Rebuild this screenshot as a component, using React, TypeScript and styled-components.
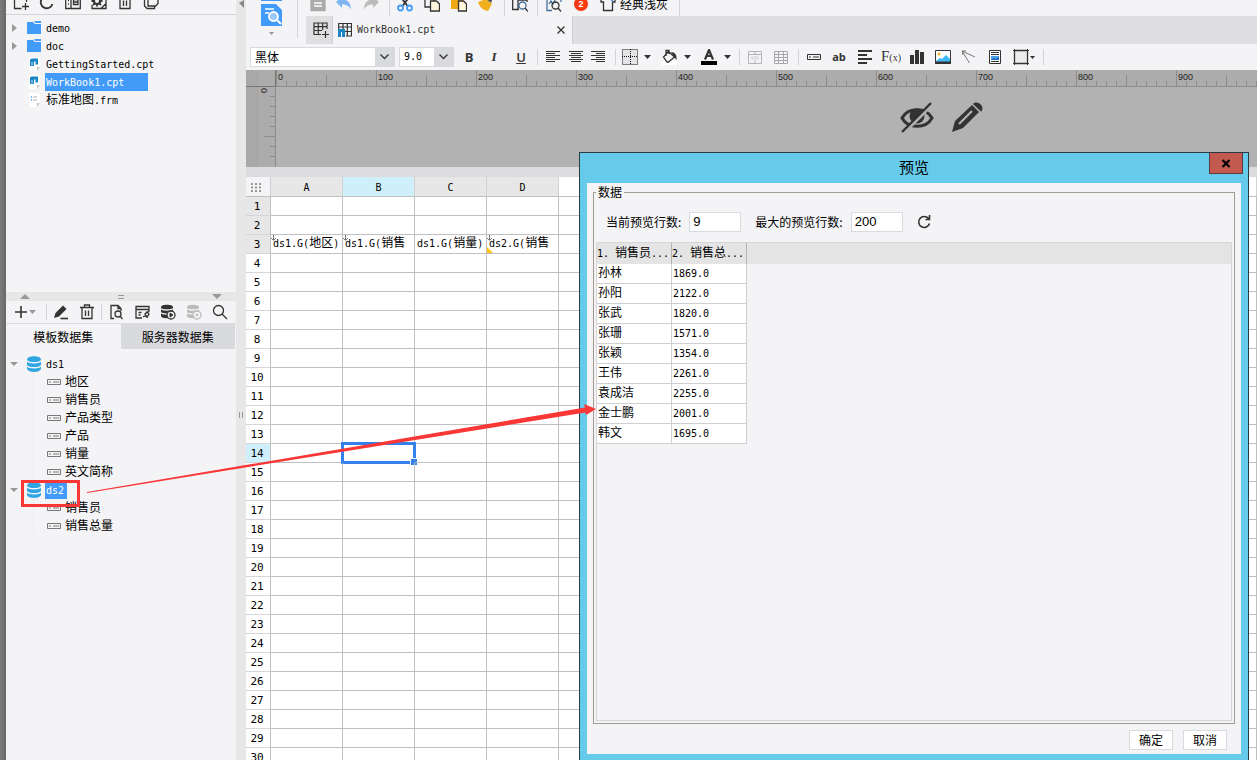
import React, { useEffect, useState } from 'react';
import styled, { createGlobalStyle, css } from 'styled-components';

const han = '"Noto Sans CJK SC", sans-serif';
const mono = '"DejaVu Sans Mono", "Noto Sans CJK SC", monospace';

const GlobalStyle = createGlobalStyle`
  * { box-sizing: border-box; }
  html, body, #root { height: 100%; }
  body { margin: 0; overflow: hidden; background: #f4f4f6; color: #000; font: 10px/18px ${mono}; }
  button, input, select { font: inherit; color: inherit; }
  ul { list-style: none; margin: 0; padding: 0; }
  svg { display: block; flex: none; }
`;

/* ---------- shared parts ---------- */

const useWindowSize = () => {
  const [size, setSize] = useState({ width: window.innerWidth, height: window.innerHeight });
  useEffect(() => {
    const update = () => setSize({ width: window.innerWidth, height: window.innerHeight });
    window.addEventListener('resize', update);
    return () => window.removeEventListener('resize', update);
  }, []);
  return size;
};

const Han = styled.span`
  font-family: ${han};
  font-size: 12px;
  line-height: 0;
`;

const Label = ({ children }: { children: string }) => (
  <>
    {children.split(/([\u4e00-\u9fff]+)/).map((part, i) =>
      i % 2 ? <Han key={i}>{part}</Han> : part,
    )}
  </>
);

const ToolButton = styled.button<{ $w: number }>`
  width: ${(p) => p.$w}px;
  height: 24px;
  flex: none;
  padding: 0;
  border: 0;
  background: none;
  display: flex;
  align-items: center;
  justify-content: center;
`;

const Separator = styled.span<{ $w: number }>`
  width: ${(p) => p.$w}px;
  flex: none;
  display: flex;
  justify-content: center;
  &::before {
    content: '';
    width: 1px;
    height: 16px;
    background: #d4d4d6;
  }
`;

type SvgProps = { w?: number; h?: number; children: React.ReactNode; color?: string };
const Icon = ({ w = 16, h = 16, children, color = '#333' }: SvgProps) => (
  <svg width={w} height={h} viewBox={`0 0 ${w} ${h}`} fill="none" stroke={color} strokeWidth="1.3" aria-hidden="true">
    {children}
  </svg>
);

const Caret = ({ color = '#333' }: { color?: string }) => (
  <Icon w={8} h={5}>
    <path d="M1 0h7L4.500 4z" fill={color} stroke="none" />
  </Icon>
);

/* ---------- page frame ---------- */

const Page = styled.div`
  position: relative;
  display: flex;
  height: 100vh;
  overflow: hidden;
`;

const DesktopEdge = styled.div`
  flex: 0 0 6px;
  background: linear-gradient(90deg, #7c7c7c, #686868);
`;

const Sidebar = styled.aside`
  flex: 0 0 230px;
  display: flex;
  flex-direction: column;
  background: #f4f4f6;
`;

const Divider = styled.div`
  flex: 0 0 10px;
  background: #e7e7e8;
  display: flex;
  flex-direction: column;
  align-items: center;
  gap: 403px;
`;

const Main = styled.main`
  flex: 1;
  min-width: 0;
  display: flex;
  flex-direction: column;
`;

/* ---------- sidebar ---------- */

const FileTools = styled.div`
  flex: 0 0 15px;
  display: flex;
  align-items: flex-end;
  padding-left: 2px;
  overflow: hidden;
  border-bottom: 1px solid #d4d4d6;
`;

const FileTree = styled.ul`
  flex: 0 0 277px;
  && { padding-top: 4px; }
`;

const FileRow = styled.li`
  display: flex;
  align-items: center;
  height: 18px;
`;

const Toggle = styled.span`
  width: 21px;
  padding-left: 4px;
`;

const NodeIcon = styled.span`
  width: 18px;
`;

const NodeName = styled.a<{ $selected?: boolean; $w?: number }>`
  height: 18px;
  color: inherit;
  text-decoration: none;
  white-space: nowrap;
  line-height: 20px;
  padding-left: 1px;
  ${(p) => p.$w && css`width: ${p.$w}px;`}
  ${(p) => p.$selected && css`background: #429bf8; color: #fff;`}
`;

const SplitBar = styled.div`
  flex: 0 0 9px;
  display: flex;
  align-items: center;
  justify-content: space-between;
  padding: 0 14px;
  background: #e7e7e8;
`;

const DataTools = styled.div`
  flex: 0 0 23px;
  min-height: 0;
  display: flex;
  align-items: center;
  border-bottom: 1px solid #dcdcde;
`;

const Tabs = styled.div`
  flex: 0 0 25px;
  display: flex;
  padding-right: 1px;
`;

const Tab = styled.button<{ $muted?: boolean }>`
  flex: 1;
  border: 0;
  padding: 0;
  font: 12px/18px ${han};
  background: ${(p) => (p.$muted ? '#d9dade' : 'transparent')};
`;

const DataTree = styled.ul`
  && { padding-top: 6px; }
`;

const FieldList = styled.ul`
  && { margin-left: 27px; border-left: 1px solid #ececee; }
`;

const FieldRow = styled.li`
  display: flex;
  align-items: center;
  gap: 3px;
  height: 18px;
  padding-left: 13px;
`;

const FolderIcon = () => (
  <Icon w={15} h={14}>
    <path d="M0 1h6l2 2h6v10H0z" fill="#429bf8" stroke="none" />
    <path d="M7 0h7v2H8.500z" fill="#429bf8" stroke="none" />
  </Icon>
);

const CptIcon = () => (
  <Icon w={15} h={14}>
    <path d="M2 0h11v10l-3 4H2z" fill="#fff" stroke="none" />
    <path d="M13 10l-3 4v-4z" fill="#c8c8ca" stroke="none" />
    <path d="M4 1.500h7v6H8.500V4.500H7V9H3V3z" fill="#1b86c6" stroke="none" />
    <path d="M5 5v3.500" stroke="#bfe3f5" strokeWidth="1" />
  </Icon>
);

const FrmIcon = () => (
  <Icon w={15} h={14}>
    <path d="M2 0h11v10l-3 4H2z" fill="#fff" stroke="none" />
    <path d="M13 10l-3 4v-4z" fill="#c8c8ca" stroke="none" />
    <path d="M4 4h1M4 7h1" stroke="#429bf8" />
    <path d="M6 4h4M6 7h4" stroke="#ccc" />
  </Icon>
);

const DatabaseIcon = () => (
  <Icon w={15} h={16}>
    <path d="M0 3.500C0-1 14-1 14 3.500v9c0 4.500-14 4.500-14 0z" fill="#2ea6e3" stroke="none" />
    <path d="M0 4.500c1 3 13 3 14 0M0 9.500c1 3 13 3 14 0" stroke="#f4f4f6" />
  </Icon>
);

const FieldIcon = ({ color = '#777' }: { color?: string }) => (
  <Icon w={14} h={6} color={color}>
    <path d="M.5.5h13v5H.5zM2 3h2M6 3h6" strokeWidth="1" />
  </Icon>
);

const Toggler = ({ open }: { open?: boolean }) => (
  <Icon w={9} h={8}>
    <path d={open ? 'M0 2h8L4 6z' : 'M2 0v8l5-4z'} fill="#999" stroke="none" />
  </Icon>
);

const files = [
  { name: 'demo', kind: 'dir' },
  { name: 'doc', kind: 'dir' },
  { name: 'GettingStarted.cpt', kind: 'cpt' },
  { name: 'WorkBook1.cpt', kind: 'cpt', selected: true },
  { name: '标准地图.frm', kind: 'frm' },
];

const datasets = [
  { name: 'ds1', fields: ['地区', '销售员', '产品类型', '产品', '销量', '英文简称'] },
  { name: 'ds2', selected: true, fields: ['销售员', '销售总量'] },
];

const DbToolIcon = ({ color, mark }: { color: string; mark: string }) => (
  <Icon color={color}>
    <path d="M1 3c0-3 12-3 12 0v9c0 3-12 3-12 0z" fill={color} stroke="none" />
    <path d="M1 4.500c1 2 11 2 12 0M1 8.500c1 2 11 2 12 0" stroke="#f4f4f6" />
    <circle cx="11" cy="11" r="4" fill="#f4f4f6" />
    <path d={mark} fill={color} strokeWidth="1" />
  </Icon>
);

const TrashIcon = () => (
  <Icon w={14}>
    <path d="M0 3.500h14M4.500 3V1h5v2M2 4v10.500h10V4M5.500 6.500v5.500M8.500 6.500v5.500" />
  </Icon>
);

const SidebarPanel = () => (
  <Sidebar>
    <FileTools>
      <ToolButton $w={26} aria-label="新建">
        <Icon><path d="M8.500 14.500H1.500V1h4l2 2.500h6V8M12.500 9v7M9 12.500h7" /></Icon>
      </ToolButton>
      <ToolButton $w={26} aria-label="刷新">
        <Icon><path d="M13.500 10A6 6 0 1 1 12 4M13 0v5H8" strokeWidth="1.800" /></Icon>
      </ToolButton>
      <ToolButton $w={26} aria-label="视图">
        <Icon><path d="M.7 2h14.600v12.500H.7zM6 2v12.500M3 6.500h1M3 10h1M8.500 5.500h4.500v5H8.500zM8.500 8h4.500" /></Icon>
      </ToolButton>
      <ToolButton $w={26} aria-label="设置">
        <Icon>
          <path d="M1 11v3.500h14V3M12 12.500l3-3v5h-5z" />
          <circle cx="6" cy="7" r="3" strokeWidth="2" />
          <path d="M6 1.500V4M6 10v2.500M.5 7H3M9 7h2.500M2 3l2 2M8 9l2 2M2 11l2-2M8 5l2-2" strokeWidth="1.800" />
        </Icon>
      </ToolButton>
      <ToolButton $w={26} aria-label="删除"><TrashIcon /></ToolButton>
      <ToolButton $w={26} aria-label="复制">
        <Icon><path d="M5 1h10v8.500l-2.500 2.500H5zM5 4H1.500v8l2.500 2.500h7.500V12" /></Icon>
      </ToolButton>
    </FileTools>
    <FileTree>
      {files.map((f) => (
        <FileRow key={f.name}>
          <Toggle>{f.kind === 'dir' && <Toggler />}</Toggle>
          <NodeIcon>
            {f.kind === 'dir' ? <FolderIcon /> : f.kind === 'cpt' ? <CptIcon /> : <FrmIcon />}
          </NodeIcon>
          <NodeName href="#" $selected={f.selected} $w={f.selected ? 103 : undefined}>
            <Label>{f.name}</Label>
          </NodeName>
        </FileRow>
      ))}
    </FileTree>
    <SplitBar>
      <Icon w={10} h={5}><path d="M0 5h10L5 0z" fill="#999" stroke="none" /></Icon>
      <Icon w={6} h={4} color="#999"><path d="M0 .5h6M0 3.500h6" strokeWidth="1" /></Icon>
      <Icon w={10} h={5}><path d="M0 0h10L5 5z" fill="#999" stroke="none" /></Icon>
    </SplitBar>
    <DataTools>
      <ToolButton $w={38} aria-label="新增">
        <Icon w={24}><path d="M2 8h12M8 2v12" strokeWidth="1.600" /><path d="M16 6h7l-3.500 4z" fill="#999" stroke="none" /></Icon>
      </ToolButton>
      <Separator $w={4} />
      <ToolButton $w={26} aria-label="编辑">
        <Icon><path d="M1 14l1.500-5L10 1.500l3.500 3.500L6 12.500z" fill="#333" stroke="none" /><path d="M7.500 14.500H15" strokeWidth="1.600" /></Icon>
      </ToolButton>
      <ToolButton $w={25} aria-label="删除"><TrashIcon /></ToolButton>
      <Separator $w={5} />
      <ToolButton $w={26} aria-label="预览">
        <Icon>
          <path d="M5 14.500H2V1.500h7l3 3V7M9 1.500v3h3" />
          <circle cx="9" cy="10" r="3" />
          <path d="M11 12l2.500 3" />
        </Icon>
      </ToolButton>
      <ToolButton $w={25} aria-label="连接">
        <Icon><path d="M7 14H1V2.500h13V7M1 5.500h13M3.500 8.500h3M3.500 11h2M8 13l2-1 3 1.500M10 10l2-2 2 2-2 3zM13 8l1.500-1.500" /></Icon>
      </ToolButton>
      <ToolButton $w={26} aria-label="执行"><DbToolIcon color="#333" mark="M10 9l3 2-3 2z" /></ToolButton>
      <ToolButton $w={26} aria-label="清除"><DbToolIcon color="#bbb" mark="M9.500 9.500l3 3M12.500 9.500l-3 3" /></ToolButton>
      <ToolButton $w={25} aria-label="搜索">
        <Icon><circle cx="6.500" cy="6.500" r="5" /><path d="M10 10l5 5" /></Icon>
      </ToolButton>
    </DataTools>
    <Tabs role="tablist">
      <Tab role="tab" aria-selected="true">模板数据集</Tab>
      <Tab role="tab" aria-selected="false" $muted>服务器数据集</Tab>
    </Tabs>
    <DataTree>
      {datasets.map((d) => (
        <li key={d.name}>
          <FileRow as="div">
            <Toggle><Toggler open /></Toggle>
            <NodeIcon><DatabaseIcon /></NodeIcon>
            <NodeName href="#" $selected={d.selected} $w={d.selected ? 22 : undefined}>{d.name}</NodeName>
          </FileRow>
          <FieldList>
            {d.fields.map((f) => (
              <FieldRow key={f}><FieldIcon /><NodeName href="#"><Label>{f}</Label></NodeName></FieldRow>
            ))}
          </FieldList>
        </li>
      ))}
    </DataTree>
  </Sidebar>
);

/* ---------- header bars ---------- */

const Header = styled.header`
  flex: 0 0 44px;
  display: flex;
  background: #f4f4f6;
`;

const PreviewButton = styled.button`
  width: 51px;
  padding: 0;
  border: 0;
  background: none;
  display: flex;
  flex-direction: column;
  align-items: center;
  gap: 6px;
`;

const HeaderRule = styled.span`
  width: 1px;
  height: 38px;
  margin-right: 8px;
  background: #d4d4d6;
`;

const HeaderRows = styled.div`
  flex: 1;
  min-width: 0;
  display: flex;
  flex-direction: column;
`;

const TopTools = styled.div`
  flex: 0 0 16px;
  display: flex;
  align-items: flex-end;
  overflow: hidden;
`;

const ThemeButton = styled(ToolButton)`
  gap: 4px;
  font: 12px/18px ${han};
`;

const Badge = styled.span`
  width: 14px;
  height: 14px;
  border-radius: 50%;
  background: #f83a10;
  color: #fff;
  font: bold 9px/14px "Liberation Sans", sans-serif;
`;

const DocTabs = styled.div`
  flex: 1;
  display: flex;
  background: #dfdfe1;
`;

const AddTab = styled(ToolButton)`
  height: 28px;
  padding-left: 4px;
  border-right: 1px solid #cfcfd1;
`;

const DocTab = styled.div`
  width: 240px;
  display: flex;
  align-items: center;
  gap: 5px;
  padding: 0 6px 0 5px;
  background: #f4f4f6;
  border-right: 1px solid #cfcfd1;
  color: #333;
`;

const DocName = styled.span`
  flex: 1;
  line-height: 20px;
`;

const FormatBar = styled.div`
  flex: 0 0 26px;
  display: flex;
  align-items: center;
  padding-left: 4px;
  background: #f4f4f6;
`;

const Combo = styled.div<{ $w: number }>`
  width: ${(p) => p.$w}px;
  height: 20px;
  margin-right: 4px;
  flex: none;
  display: grid;
  grid-template-columns: 1fr 19px;
  border: 1px solid #d9dade;
`;

const ComboSelect = styled.select<{ $han?: boolean }>`
  grid-area: 1 / 1 / 2 / 3;
  appearance: none;
  border: 0;
  border-radius: 0;
  padding: 0 0 0 4px;
  background: linear-gradient(270deg, #d9dade 19px, #fff 19px);
  ${(p) => p.$han && css`font: 12px/18px ${han};`}
`;

const ComboArrow = styled.span`
  grid-area: 1 / 2;
  display: grid;
  place-items: center;
  pointer-events: none;
`;

const Glyph = styled.span<{ $look: 'b' | 'i' | 'u' | 'ab' | 'fx' }>`
  color: #333;
  font: bold 13px/16px "Open Sans", sans-serif;
  ${(p) => p.$look === 'i' && css`font-family: "Liberation Serif", serif; font-style: italic;`}
  ${(p) => p.$look === 'u' && css`text-decoration: underline; font-weight: 600;`}
  ${(p) => p.$look === 'ab' && css`font-size: 11px;`}
  ${(p) => p.$look === 'fx' && css`font: 15px/16px "Liberation Serif", serif;`}
`;

const Small = styled.small`
  font-size: 10px;
`;

const Chevron = () => (
  <Icon w={9} h={6}><path d="M.5.5l4 4 4-4" /></Icon>
);

const Lines = ({ d }: { d: string }) => (
  <Icon w={14} h={12}><path d={d} strokeWidth="1" /></Icon>
);

const HeaderBars = () => (
  <>
    <Header>
      <PreviewButton aria-label="模板预览">
        <Icon w={22} h={26}>
          <path d="M0 0h21v1H0zM0 4h15l6 6v16H0z" fill="#429bf8" stroke="none" />
          <path d="M4 9h9M4 13h4" stroke="#fff" strokeWidth="1.600" />
          <circle cx="12.500" cy="16.500" r="4.500" fill="#9cc9fb" stroke="#fff" strokeWidth="1.800" />
          <path d="M16 20l4 4" stroke="#fff" strokeWidth="2.200" />
        </Icon>
        <Icon w={5} h={3}><path d="M0 0h5L2.500 3z" fill="#999" stroke="none" /></Icon>
      </PreviewButton>
      <HeaderRule />
      <HeaderRows>
        <TopTools>
          <ToolButton $w={24} aria-label="保存">
            <Icon color="#aaa"><path d="M1 0h14v14.500H1z" fill="#aaa" /><path d="M4 7h8M4 10h8" stroke="#fff" /></Icon>
          </ToolButton>
          <ToolButton $w={28} aria-label="撤销">
            <Icon><path d="M0 6l6-6v3.500c6 0 9 4 9 10-2-3.500-4-5-9-5V12z" fill="#7fb5f2" stroke="none" /></Icon>
          </ToolButton>
          <ToolButton $w={26} aria-label="重做">
            <Icon><path d="M16 6l-6-6v3.500C4 3.500 1 7.500 1 13.500c2-3.500 4-5 9-5V12z" fill="#bbb" stroke="none" /></Icon>
          </ToolButton>
          <Separator $w={10} />
          <ToolButton $w={22} aria-label="剪切">
            <Icon><path d="M3 0l7.500 10M13 0L5.500 10" strokeWidth="1.800" /><circle cx="3.500" cy="12" r="2.500" stroke="#429bf8" strokeWidth="1.800" /><circle cx="12.500" cy="12" r="2.500" stroke="#429bf8" strokeWidth="1.800" /></Icon>
          </ToolButton>
          <ToolButton $w={32} aria-label="复制">
            <Icon><path d="M6 11H1V1h9v4" /><path d="M6.500 5h6l3 3v7h-9z" fill="#fff6dc" /></Icon>
          </ToolButton>
          <ToolButton $w={22} aria-label="粘贴">
            <Icon><path d="M0 1h12v12H0z" fill="#f2a916" stroke="none" /><path d="M7.500 5h5l3 3v7h-8z" fill="#fff6dc" /></Icon>
          </ToolButton>
          <ToolButton $w={30} aria-label="格式刷">
            <Icon><path d="M1 6l8-3 6 5-4 7C5 14 3 11 1 6z" fill="#f2b01e" stroke="none" /><path d="M9 3l5 4 2-5-4-3z" fill="#555" stroke="none" /></Icon>
          </ToolButton>
          <Separator $w={8} />
          <ToolButton $w={24} aria-label="查找">
            <Icon><path d="M7 13.500H.7V0M6 13V4h9v2" /><circle cx="10.500" cy="9.500" r="3.500" stroke="#46709c" /><path d="M13 12l3 3.500" /></Icon>
          </ToolButton>
          <Separator $w={10} />
          <ToolButton $w={24} aria-label="监控">
            <Icon><path d="M6 14.500H1V0M15 0v6M3 8l2-3 2 3 2-4" stroke="#46709c" /><circle cx="9.500" cy="9.500" r="3.500" /><path d="M12 12l3 3.500" /></Icon>
          </ToolButton>
          <ToolButton $w={30} aria-label="消息"><Badge>2</Badge></ToolButton>
          <ThemeButton $w={76}>
            <Icon><path d="M3.500 6H1V2l4-2h6l4 2v4h-2.500v8.500h-9z" /><path d="M11 3h2v2h-2z" fill="#429bf8" stroke="none" /></Icon>
            经典浅灰
          </ThemeButton>
          <Separator $w={14} />
        </TopTools>
        <DocTabs>
          <AddTab $w={27} aria-label="新建模板">
            <Icon><path d="M8 12.500H1V1h13v6M1 4.700h13M1 8.500h8M5.300 1v11.500M9.700 1v7M12.500 9v7M9 12.500h7" strokeWidth="1.200" /></Icon>
          </AddTab>
          <DocTab>
            <Icon w={14}><path d="M8 14h5.500V1.500H.7V7M.7 5h13M7 9.500h6.500M5 1.500V7M9.300 1.500V14" strokeWidth="1.200" /><path d="M0 7h7v8H4v-5H3v5H0z" fill="#1b86c6" stroke="none" /></Icon>
            <DocName>WorkBook1.cpt</DocName>
            <ToolButton $w={10} aria-label="关闭"><Icon w={8} h={8}><path d="M.5.5l7 7M7.500.5l-7 7" /></Icon></ToolButton>
          </DocTab>
        </DocTabs>
      </HeaderRows>
    </Header>
    <FormatBar>
      <Combo $w={145}>
        <ComboSelect $han aria-label="字体" defaultValue="黑体"><option>黑体</option></ComboSelect>
        <ComboArrow><Chevron /></ComboArrow>
      </Combo>
      <Combo $w={55}>
        <ComboSelect aria-label="字号" defaultValue="9.0"><option>9.0</option></ComboSelect>
        <ComboArrow><Chevron /></ComboArrow>
      </Combo>
      <ToolButton $w={22} aria-label="加粗"><Glyph $look="b">B</Glyph></ToolButton>
      <ToolButton $w={28} aria-label="斜体"><Glyph $look="i">I</Glyph></ToolButton>
      <ToolButton $w={26} aria-label="下划线"><Glyph $look="u">U</Glyph></ToolButton>
      <Separator $w={6} />
      <ToolButton $w={26} aria-label="左对齐"><Lines d="M0 .5h14M0 2.500h9M0 4.500h14M0 6.500h9M0 8.500h14M0 10.500h9" /></ToolButton>
      <ToolButton $w={20} aria-label="居中"><Lines d="M0 .5h14M2 2.500h10M0 4.500h14M2 6.500h10M0 8.500h14M2 10.500h10" /></ToolButton>
      <ToolButton $w={24} aria-label="右对齐"><Lines d="M0 .5h14M5 2.500h9M0 4.500h14M5 6.500h9M0 8.500h14M5 10.500h9" /></ToolButton>
      <Separator $w={10} />
      <ToolButton $w={20} aria-label="边框">
        <Icon><path d="M.5.5h15v15H.5zM8.500 0v16M0 7.500h16" fill="#e4e4e6" strokeWidth="1" strokeDasharray="1 1" stroke="#111" /></Icon>
      </ToolButton>
      <ToolButton $w={14} aria-label="边框选项"><Caret /></ToolButton>
      <ToolButton $w={26} aria-label="填充">
        <Icon w={22}>
          <path d="M5 12h16v4H5z" fill="#fff" stroke="none" />
          <path d="M12.500 2.500l6 5.500-6 5H11L7.500 8zM10 7V1.500h3V5" />
          <path d="M15 3c4 0 6 3 5.500 8L18 8z" fill="#333" stroke="none" />
        </Icon>
      </ToolButton>
      <ToolButton $w={14} aria-label="填充选项"><Caret /></ToolButton>
      <ToolButton $w={26} aria-label="字体颜色">
        <Icon w={20}>
          <path d="M4 12h16v4H4z" fill="#000" stroke="none" />
          <path d="M8 10.500l4-9.500 4 9.500M9.500 7h5" strokeWidth="2.200" />
        </Icon>
      </ToolButton>
      <ToolButton $w={14} aria-label="颜色选项"><Caret /></ToolButton>
      <Separator $w={10} />
      <ToolButton $w={22} aria-label="合并单元格">
        <Icon w={14} h={13} color="#b4b4b6"><path d="M.5.5h13v12H.5zM.5 3.500h13M7 .5v3M7 9.500v3" strokeWidth="1" /><path d="M3 5h8v4H3z" fill="#e2e2e4" stroke="none" /></Icon>
      </ToolButton>
      <ToolButton $w={30} aria-label="取消合并">
        <Icon w={14} h={13} color="#a8a8aa"><path d="M.5.5h13v12H.5zM.5 3.500h13M.5 6.500h13M.5 9.500h13M4.500 .5v12M9.500.5v12" strokeWidth="1" /></Icon>
      </ToolButton>
      <Separator $w={5} />
      <ToolButton $w={25} aria-label="数据列"><FieldIcon color="#333" /></ToolButton>
      <ToolButton $w={26} aria-label="文本"><Glyph $look="ab">ab</Glyph></ToolButton>
      <ToolButton $w={26} aria-label="富文本"><Icon w={14} h={14}><path d="M0 1h14M0 5h9M0 9h14M0 13h9" strokeWidth="1.800" /></Icon></ToolButton>
      <ToolButton $w={26} aria-label="公式"><Glyph $look="fx">F<Small>(x)</Small></Glyph></ToolButton>
      <ToolButton $w={26} aria-label="图表"><Icon w={14} h={14}><path d="M0 5h4v9H0zM5 0h4v14H5zM10 2h4v12h-4z" fill="#333" stroke="none" /></Icon></ToolButton>
      <ToolButton $w={26} aria-label="图片">
        <Icon w={16} h={14}><path d="M.5.5h15v13H.5z" fill="#fff" strokeWidth="1" /><path d="M1 11l4-3 2 1 4-4 4 4v3H1z" fill="#3fb9f5" stroke="none" /><circle cx="4" cy="4" r="1.500" fill="#f5b32b" stroke="none" /><path d="M0 12.500h16" strokeWidth="2" /></Icon>
      </ToolButton>
      <ToolButton $w={26} aria-label="斜线"><Icon w={14} h={14} color="#777"><path d="M0 1l13 6M0 1l7.500 12M0 1l4 0M0 1l1 4" strokeWidth="1" /></Icon></ToolButton>
      <ToolButton $w={26} aria-label="子报表">
        <Icon w={12} h={14}><path d="M.5.5h11v13H.5z" fill="#fff" strokeWidth="1" /><path d="M2 2.500h8M2 4.500h8M2 11.500h8" strokeWidth="1" /><path d="M2 6h8v4H2z" fill="#4aa0ea" stroke="none" /><path d="M2 10l3-2 2 1 3-2v3z" fill="#1a66b8" stroke="none" /></Icon>
      </ToolButton>
      <ToolButton $w={32} aria-label="悬浮元素">
        <Icon w={22}><path d="M1.500 1.500h13v13h-13z" fill="#ececee" /><path d="M0 1.500h16M0 14.500h16M1.500 0v16M14.500 0v16" strokeWidth="1" /><path d="M17 7h5l-2.500 3z" fill="#333" stroke="none" /></Icon>
      </ToolButton>
      <Separator $w={7} />
    </FormatBar>
  </>
);

/* ---------- parameter pane ---------- */

const ParameterPane = styled.section`
  flex: 0 0 97px;
  display: grid;
  grid-template: 17px 80px / 30px 1fr;
  overflow: hidden;
  background: #b2b2b2;
`;

const RulerCorner = styled.div`
  border-right: 1px solid #777;
  border-bottom: 1px solid #777;
  background: linear-gradient(90deg, #a8a8a8 13px, #acacac 13px);
`;

const TopRuler = styled.div`
  display: flex;
  overflow: hidden;
  background: #acacac;
  border-bottom: 1px solid #8c8c8c;
`;

const SideRuler = styled.div`
  display: flex;
  justify-content: flex-end;
  border-right: 1px solid #8c8c8c;
  background: linear-gradient(90deg, #a8a8a8 13px, #acacac 13px);
`;

const RulerText = styled.text`
  font: 9px "Liberation Sans", sans-serif;
  fill: #222;
  stroke: none;
`;

const PaneTools = styled.div`
  display: flex;
  gap: 18px;
  padding: 18px 0 0 624px;
`;

const RulerUnit = ({ value }: { value: number }) => (
  <Icon w={100} h={16} color="#8c8c8c">
    <path
      d="M.5 0v16M10.500 11v5M20.500 11v5M30.500 11v5M40.500 11v5M50.500 5v11M60.500 11v5M70.500 11v5M80.500 11v5M90.500 11v5"
      strokeWidth="1"
    />
    <RulerText x="2" y="10">{value}</RulerText>
  </Icon>
);

const Parameters = () => {
  const { width } = useWindowSize();
  const units = Math.ceil((width - 276) / 100);
  return (
    <ParameterPane>
      <RulerCorner />
      <TopRuler>{Array.from({ length: units }, (_, i) => <RulerUnit key={i} value={i * 100} />)}</TopRuler>
      <SideRuler>
        <Icon w={16} h={80} color="#8c8c8c">
          <path d="M11 9.500h5M11 19.500h5M11 29.500h5M11 39.500h5M5 49.500h11M11 59.500h5M11 69.500h5" strokeWidth="1" />
          <RulerText transform="translate(8 6) rotate(-90)">0</RulerText>
        </Icon>
      </SideRuler>
      <PaneTools>
        <ToolButton $w={34} aria-label="隐藏">
          <Icon w={34} h={32}>
            <path d="M2 17C8 6 26 6 32 17 26 28 8 28 2 17z" strokeWidth="3" />
            <circle cx="17" cy="15" r="7.500" fill="#333" stroke="none" />
            <path d="M4 32L33 3" stroke="#b2b2b2" strokeWidth="3" />
            <path d="M2 31L31 2" strokeWidth="2.400" />
          </Icon>
        </ToolButton>
        <ToolButton $w={32} aria-label="编辑参数">
          <Icon w={32} h={32}>
            <path d="M0 31l3-11L20 4l7 7-16 16z" fill="#333" stroke="none" />
            <path d="M21 3c4-5 13 3 8 7.500z" fill="#333" stroke="none" />
            <path d="M7 23L20 10" stroke="#b2b2b2" strokeWidth="2.200" />
          </Icon>
        </ToolButton>
      </PaneTools>
    </ParameterPane>
  );
};

/* ---------- sheet ---------- */

const SheetArea = styled.section`
  flex: 1;
  min-height: 0;
  overflow: hidden;
  border-top: 10px solid #dcdcde;
  background: #fff;
`;

const Sheet = styled.table`
  width: 100%;
  table-layout: fixed;
  border-spacing: 0;
`;

const ColHead = styled.th<{ $w?: number; $tone?: string }>`
  ${(p) => p.$w && css`width: ${p.$w}px;`}
  height: 20px;
  padding: 2px 0 0;
  font: 10px/16px ${mono};
  background: ${(p) => p.$tone ?? '#e7e7e8'};
  border-right: 1px solid #d0d0d2;
  border-bottom: 1px solid #c0c0c0;
`;

const Corner = styled(ColHead)`
  background: #f4f4f6;
  svg { margin: 0 0 0 5px; }
`;

const RowHead = styled.th<{ $tone: string }>`
  height: 19px;
  padding: 2px 2px 0 0;
  font: 11px/16px "DejaVu Sans Mono", monospace;
  text-align: center;
  background: ${(p) => p.$tone};
  border-right: 1px solid #c0c0c0;
  border-bottom: 1px solid #d6d6d8;
`;

const Cell = styled.td`
  position: relative;
  height: 19px;
  padding: 0 0 0 2px;
  line-height: 18px;
  white-space: nowrap;
  border-right: 1px solid #c0c0c0;
  border-bottom: 1px solid #c0c0c0;
`;

const ExpandMark = styled.span`
  position: absolute;
  left: 0;
  top: 0;
`;

const CornerMark = styled.span`
  position: absolute;
  left: 0;
  bottom: 0;
  border: 3px solid transparent;
  border-left-color: #ffc20e;
  border-bottom-color: #ffc20e;
`;

const Selection = styled.span`
  position: absolute;
  inset: -2px;
  border: 3px solid #3481ec;
  &::after {
    content: '';
    position: absolute;
    right: -4px;
    bottom: -4px;
    width: 6px;
    height: 6px;
    background: #3481ec;
    border: 1px solid #fff;
    border-right: 0;
    border-bottom: 0;
  }
`;

const formulas: Record<string, { text: string; expand?: boolean; flag?: boolean }> = {
  A3: { text: 'ds1.G(地区)', expand: true },
  B3: { text: 'ds1.G(销售', expand: true },
  C3: { text: 'ds1.G(销量)' },
  D3: { text: 'ds2.G(销售', expand: true, flag: true },
};

const SheetView = () => {
  const { height } = useWindowSize();
  const rows = Math.max(14, Math.ceil((height - 197) / 19));
  return (
    <SheetArea>
      <Sheet>
        <thead>
          <tr>
            <Corner $w={25} aria-label="全选">
              <Icon w={10} h={9} color="#999">
                <path d="M0 1h2M4 1h2M8 1h2M0 4.500h2M4 4.500h2M8 4.500h2M0 8h2M4 8h2M8 8h2" strokeWidth="2" />
              </Icon>
            </Corner>
            {['A', 'B', 'C', 'D'].map((c) => (
              <ColHead key={c} $w={72} $tone={c === 'B' ? '#cfeffb' : undefined}>{c}</ColHead>
            ))}
            <ColHead $tone="#fff" />
          </tr>
        </thead>
        <tbody>
          {Array.from({ length: rows }, (_, i) => i + 1).map((r) => (
            <tr key={r}>
              <RowHead $tone={r === 14 ? '#cfeffb' : r < 4 ? '#e7e7e8' : '#fff'}>{r}</RowHead>
              {['A', 'B', 'C', 'D', 'E'].map((c) => {
                const f = formulas[c + r];
                return (
                  <Cell key={c}>
                    {f && <Label>{f.text}</Label>}
                    {f?.expand && (
                      <ExpandMark><Icon w={6} h={6} color="#777"><path d="M2.500 0v5M0 3l2.500 2.500L5 3" strokeWidth="1" /></Icon></ExpandMark>
                    )}
                    {f?.flag && <CornerMark />}
                    {c + r === 'B14' && <Selection />}
                  </Cell>
                );
              })}
            </tr>
          ))}
        </tbody>
      </Sheet>
    </SheetArea>
  );
};

/* ---------- preview window ---------- */

const Dialog = styled.section`
  position: absolute;
  left: 579px;
  right: 8px;
  top: 152px;
  bottom: 0;
  display: flex;
  flex-direction: column;
  background: #66caea;
  border: 1px solid #2b3b44;
  border-bottom: 0;
  font: 12px/18px ${han};
`;

const TitleBar = styled.div`
  flex: 0 0 30px;
  display: grid;
  grid-template-columns: 1fr auto 1fr;
  padding: 0 5px;
`;

const Title = styled.h1`
  grid-column: 2;
  margin: 0;
  font: 15px/28px ${han};
`;

const CloseButton = styled.button`
  justify-self: end;
  width: 34px;
  height: 21px;
  padding: 0;
  display: grid;
  place-items: center;
  background: #c35a50;
  border: 1px solid #5e3a40;
  border-top: 0;
`;

const DialogBody = styled.div`
  flex: 1;
  min-height: 0;
  display: flex;
  flex-direction: column;
  margin: 0 7px 6px;
  padding: 1px 6px 0;
  background: #f4f4f6;
`;

const Group = styled.fieldset`
  flex: 1;
  min-height: 0;
  min-width: 0;
  display: flex;
  flex-direction: column;
  margin: 0;
  padding: 0 2px 2px;
  border: 1px solid #a09c92;
`;

const Legend = styled.legend`
  height: 16px;
  padding: 0 2px;
  line-height: 16px;
`;

const Controls = styled.div`
  flex: 0 0 42px;
  display: flex;
  align-items: center;
  padding: 1px 0 0 10px;
`;

const NumberField = styled.input`
  width: 52px;
  height: 20px;
  margin: 0 14px 0 8px;
  padding: 0 3px;
  border: 1px solid #d9dade;
  background: #fff;
  font: 13px/18px "Liberation Sans", sans-serif;
`;

const ResultPane = styled.div`
  flex: 1;
  min-height: 0;
  border: 1px solid #d6d6d8;
`;

const ResultTable = styled.table`
  width: 100%;
  table-layout: fixed;
  border-spacing: 0;
  font: 10px/18px ${mono};
`;

const ResultHead = styled.th<{ $w?: number }>`
  ${(p) => p.$w && css`width: ${p.$w}px; border-right: 1px solid #b4b4ac;`}
  height: 21px;
  padding: 0;
  font-weight: normal;
  text-align: left;
  white-space: nowrap;
  background: #e4e4e5;
`;

const ResultCell = styled.td`
  height: 20px;
  padding: 0 0 0 1px;
  background: #fff;
  border-right: 1px solid #d0d0d2;
  border-bottom: 1px solid #d0d0d2;
`;

const Footer = styled.div`
  flex: 0 0 30px;
  display: flex;
  justify-content: flex-end;
  align-items: center;
  gap: 10px;
  padding: 2px 8px 0 0;
`;

const DialogButton = styled.button`
  width: 44px;
  height: 20px;
  padding: 0;
  background: #fff;
  border: 1px solid #d9dade;
`;

const results = [
  ['孙林', '1869.0'], ['孙阳', '2122.0'], ['张武', '1820.0'], ['张珊', '1571.0'], ['张颖', '1354.0'],
  ['王伟', '2261.0'], ['袁成洁', '2255.0'], ['金士鹏', '2001.0'], ['韩文', '1695.0'],
];

const PreviewDialog = () => (
  <Dialog role="dialog" aria-labelledby="preview-title">
    <TitleBar>
      <Title id="preview-title">预览</Title>
      <CloseButton aria-label="关闭">
        <Icon w={10} h={9} color="#000"><path d="M1.500 1l7 7M8.500 1l-7 7" strokeWidth="2.200" /></Icon>
      </CloseButton>
    </TitleBar>
    <DialogBody>
      <Group>
        <Legend>数据</Legend>
        <Controls>
          <label htmlFor="current-rows">当前预览行数:</label>
          <NumberField id="current-rows" defaultValue="9" />
          <label htmlFor="max-rows">最大的预览行数:</label>
          <NumberField id="max-rows" defaultValue="200" />
          <ToolButton $w={14} aria-label="刷新">
            <Icon w={14}><path d="M12.500 9.500A5.500 5.500 0 1 1 11.500 4.500M12.500 1v4.500H8.500" strokeWidth="1.600" /></Icon>
          </ToolButton>
        </Controls>
        <ResultPane>
          <ResultTable>
            <thead>
              <tr>
                <ResultHead $w={75}><Label>1. 销售员...</Label></ResultHead>
                <ResultHead $w={75}><Label>2. 销售总...</Label></ResultHead>
                <ResultHead aria-hidden="true" />
              </tr>
            </thead>
            <tbody>
              {results.map(([name, total]) => (
                <tr key={name}>
                  <ResultCell><Label>{name}</Label></ResultCell>
                  <ResultCell>{total}</ResultCell>
                </tr>
              ))}
            </tbody>
          </ResultTable>
        </ResultPane>
      </Group>
      <Footer>
        <DialogButton>确定</DialogButton>
        <DialogButton>取消</DialogButton>
      </Footer>
    </DialogBody>
  </Dialog>
);

/* ---------- annotations ---------- */

const Highlight = styled.div`
  position: absolute;
  left: 21px;
  top: 480px;
  width: 59px;
  height: 27px;
  border: 3px solid #fa3737;
  pointer-events: none;
`;

const Pointer = styled.div`
  position: absolute;
  left: 87px;
  top: 404px;
  pointer-events: none;
`;

export default function App() {
  return (
    <Page>
      <GlobalStyle />
      <DesktopEdge />
      <SidebarPanel />
      <Divider>
        <Icon w={5} h={9}><path d="M5 0v8L0 3z" fill="#888" stroke="none" /></Icon>
        <Icon w={4} h={6} color="#999"><path d="M.5 0v6M3.500 0v6" strokeWidth="1" /></Icon>
      </Divider>
      <Main>
        <HeaderBars />
        <Parameters />
        <SheetView />
      </Main>
      <PreviewDialog />
      <Highlight />
      <Pointer>
        <svg width="510" height="90" viewBox="0 0 510 90" aria-hidden="true">
          <path d="M0 88L498 3.500 497 0l12 5L499 11l-.500-2.500L0 89z" fill="#fa3737" />
        </svg>
      </Pointer>
    </Page>
  );
}
